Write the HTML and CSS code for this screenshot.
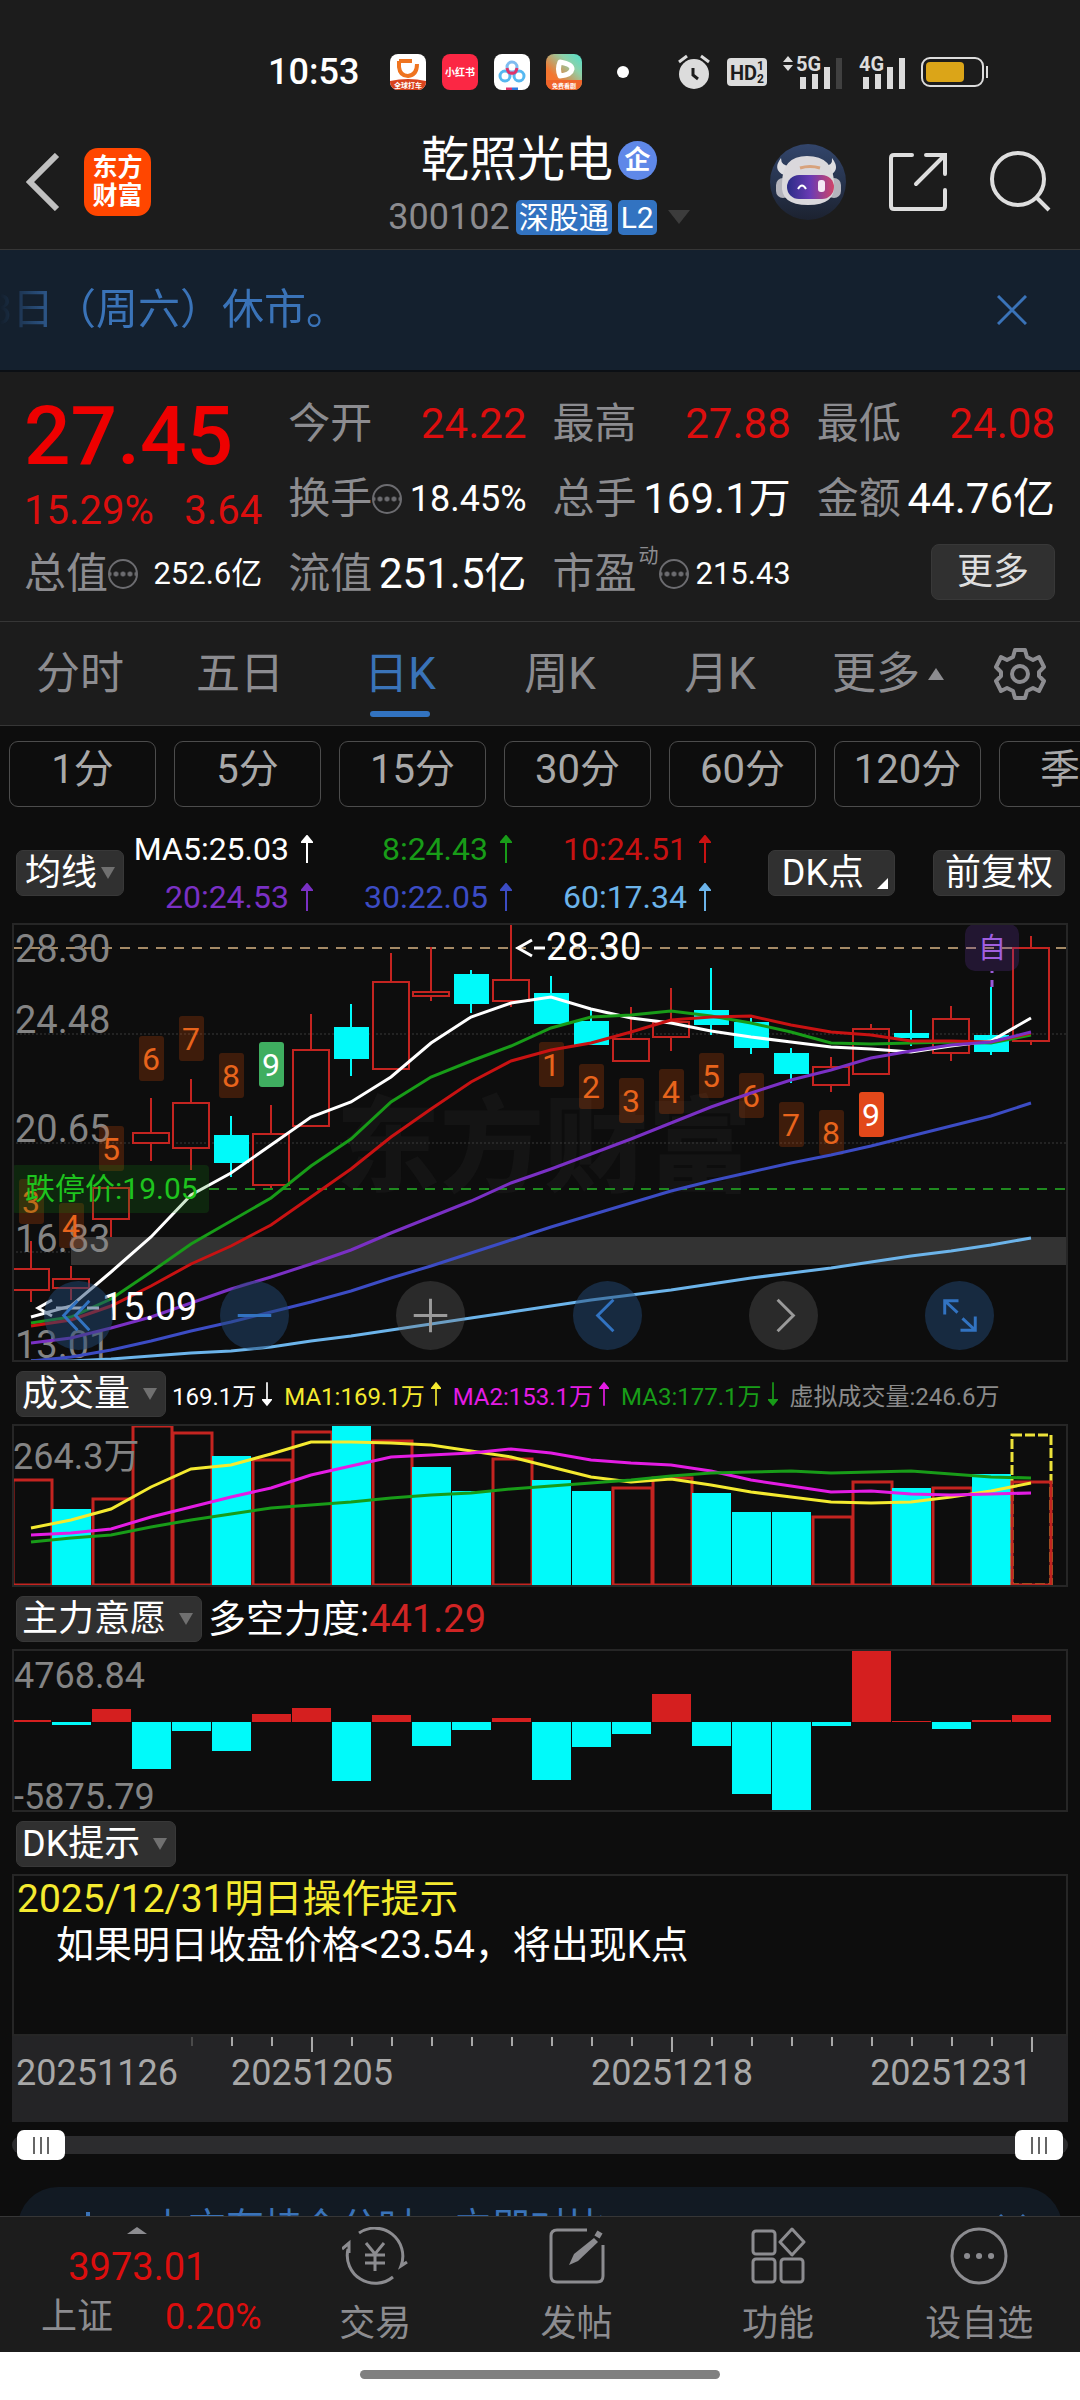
FILE: index.html
```html
<!DOCTYPE html>
<html lang="zh-CN">
<head>
  <meta charset="UTF-8">
  <meta name="viewport" content="width=device-width, initial-scale=1.0">
  <title>乾照光电 300102</title>
  <link rel="stylesheet" href="styles.css">
</head>
<body>
  <div class="status-bar">
    <span class="clock">10:53</span>
    <div class="app-icons">
      <svg width="36" height="36" viewBox="0 0 36 36">
        <clipPath id="appClip"><rect width="36" height="36" rx="8"/></clipPath>
        <g clip-path="url(#appClip)">
          <rect width="36" height="36" fill="#fff"/>
          <path d="M0 27Q18 23 36 27V36H0Z" fill="#d9431e"/>
          <path d="M9 7H22M9 7V13Q10 22 18 22Q27 21 27 10" fill="none" stroke="#ef7420" stroke-width="4"/>
        </g>
        <text x="18" y="34" class="app-text" font-size="7">全球打车</text>
      </svg>
      <svg width="36" height="36" viewBox="0 0 36 36">
        <rect width="36" height="36" rx="8" fill="#fb2744"/>
        <text x="18" y="22" class="app-text" font-size="10">小红书</text>
      </svg>
      <svg width="36" height="36" viewBox="0 0 36 36">
        <rect width="36" height="36" rx="8" fill="#fff"/>
        <circle cx="11" cy="22" r="5" fill="none" stroke="#56b8f0" stroke-width="3"/>
        <circle cx="25" cy="22" r="5" fill="none" stroke="#56b8f0" stroke-width="3"/>
        <circle cx="18" cy="13" r="5" fill="none" stroke="#7fbcf0" stroke-width="3"/>
        <path d="M13 14Q14 20 18 19Q22 20 23 14" fill="none" stroke="#e0336a" stroke-width="3"/>
        <path d="M12 35H18" stroke="#e0336a" stroke-width="3"/><path d="M18 35H24" stroke="#2f7be0" stroke-width="3"/>
      </svg>
      <svg width="36" height="36" viewBox="0 0 36 36">
        <linearGradient id="playBg" x1="0" y1="1" x2="1" y2="0">
          <stop offset="0.3" stop-color="#f4762f"/><stop offset="0.7" stop-color="#8fd0a8"/><stop offset="1" stop-color="#4fe0cc"/>
        </linearGradient>
        <g clip-path="url(#appClip)">
          <rect width="36" height="36" fill="url(#playBg)"/>
          <rect y="26" width="36" height="10" fill="#f0642a"/>
          <path d="M14 8Q26 10 26 15Q25 21 14 22Q11 15 14 8Z" fill="none" stroke="#fff" stroke-width="5" stroke-linejoin="round"/>
        </g>
        <text x="18" y="34" class="app-text" font-size="6">免费看剧</text>
      </svg>
    </div>
    <i class="more-dot"></i>
    <div class="system-icons">
      <svg width="34" height="36" viewBox="0 0 34 36">
        <circle cx="17" cy="20" r="15" fill="#dcdcdc"/>
        <path d="M2 8L10 2M32 8L24 2" stroke="#dcdcdc" stroke-width="3"/>
        <path d="M16 14V21L21 25" fill="none" stroke="#1c1c1c" stroke-width="3"/>
      </svg>
      <svg width="40" height="28" viewBox="0 0 40 28">
        <rect width="40" height="28" rx="4" fill="#dcdcdc"/>
        <text x="3" y="22" font-size="20" class="hd-text">HD</text>
        <text x="30" y="12" font-size="12" class="hd-text">1</text>
        <text x="30" y="25" font-size="12" class="hd-text">2</text>
      </svg>
      <svg width="60" height="34" viewBox="0 0 60 34">
        <path d="M5 1L10 7H0ZM5 16L0 10H10Z" fill="#dcdcdc"/>
        <text x="13" y="16" font-size="20" class="net-text">5G</text>
        <path d="M20 34V22M32 34V19M44 34V12" stroke="#dcdcdc" stroke-width="6"/>
        <path d="M56 34V3" stroke="#404040" stroke-width="6"/>
      </svg>
      <svg width="46" height="34" viewBox="0 0 46 34">
        <text x="0" y="16" font-size="20" class="net-text">4G</text>
        <path d="M7 34V22M19 34V19M31 34V12M43 34V3" stroke="#dcdcdc" stroke-width="6"/>
      </svg>
      <svg width="68" height="30" viewBox="0 0 68 30">
        <rect x="1" y="1" width="61" height="28" rx="8" fill="none" stroke="#dcdcdc" stroke-width="2"/>
        <rect x="5" y="5" width="38" height="20" rx="4" fill="#dba518"/>
        <path d="M66 9V21" stroke="#dcdcdc" stroke-width="2"/>
      </svg>
    </div>
  </div>

  <header class="header">
    <div class="header-left">
      <button class="icon-btn" aria-label="返回">
        <svg width="34" height="58" viewBox="0 0 34 58"><path d="M31 2L4 29L31 56" fill="none" stroke="#c0c0c0" stroke-width="6"/></svg>
      </button>
      <a href="#" class="brand"><span>东方</span><span>财富</span></a>
    </div>
    <div class="header-title">
      <h1>乾照光电<span class="badge">企</span></h1>
      <div class="subtitle">
        <span class="code">300102</span>
        <span class="tag">深股通</span>
        <span class="tag">L2</span>
        <i class="triangle"></i>
      </div>
    </div>
    <div class="header-right">
      <a href="#" class="icon-btn" aria-label="助手">
        <svg width="76" height="76" viewBox="0 0 76 76">
          <linearGradient id="skyBg" x1="0" y1="0" x2="0" y2="1"><stop offset="0" stop-color="#32456b"/><stop offset="1" stop-color="#1c2230"/></linearGradient>
          <linearGradient id="visor"><stop offset="0" stop-color="#2a2c86"/><stop offset="0.5" stop-color="#6a3bb4"/><stop offset="1" stop-color="#d04468"/></linearGradient>
          <circle cx="38" cy="38" r="38" fill="url(#skyBg)"/>
          <path d="M11 14Q2 26 14 31L20 22Q11 22 11 14ZM62 14Q71 26 60 31L54 22Q63 22 62 14Z" fill="#dedee2"/>
          <rect x="6" y="34" width="14" height="20" rx="7" fill="#b4b4bc"/>
          <rect x="57" y="34" width="14" height="20" rx="7" fill="#b4b4bc"/>
          <path d="M12 40Q12 12 37 12Q64 12 64 40Q66 61 38 61Q10 61 12 40Z" fill="#dad8dc"/>
          <rect x="17" y="31" width="47" height="24" rx="12" fill="url(#visor)"/>
          <path d="M28 45Q32 38 36 45" fill="none" stroke="#fff" stroke-width="2"/>
          <rect x="48" y="36" width="7" height="12" rx="3" fill="#f4e8f4"/>
          <path d="M30 24Q40 21 50 24" fill="none" stroke="#d8a27c" stroke-width="3"/>
        </svg>
      </a>
      <button class="icon-btn" aria-label="分享">
        <svg width="60" height="60" viewBox="0 0 60 60"><path d="M24 3H6Q3 3 3 6V54Q3 57 6 57H54Q57 57 57 54V38M38 3H57V22M56 4L28 32" fill="none" stroke="#dedede" stroke-width="4" stroke-linecap="round"/></svg>
      </button>
      <button class="icon-btn" aria-label="搜索">
        <svg width="62" height="62" viewBox="0 0 62 62"><circle cx="28" cy="28" r="26" fill="none" stroke="#dedede" stroke-width="4"/><path d="M47 47L59 59" stroke="#dedede" stroke-width="4"/></svg>
      </button>
    </div>
  </header>

  <div class="notice">
    <div class="notice-text"><span>3日（周六）休市。</span></div>
    <button class="icon-btn" aria-label="关闭">
      <svg width="30" height="30" viewBox="0 0 30 30"><path d="M1 1L29 29M29 1L1 29" stroke="#3a73b8" stroke-width="3"/></svg>
    </button>
  </div>

  <section class="quote">
    <div class="price-box">
      <strong class="price">27.45</strong>
      <div class="change"><span>15.29%</span><span>3.64</span></div>
    </div>
    <div class="cell"><span class="label">今开</span><span class="value up">24.22</span></div>
    <div class="cell"><span class="label">最高</span><span class="value up">27.88</span></div>
    <div class="cell"><span class="label">最低</span><span class="value up">24.08</span></div>
    <div class="cell"><span class="label">换手<i class="info"></i></span><span class="value medium">18.45%</span></div>
    <div class="cell"><span class="label">总手</span><span class="value">169.1万</span></div>
    <div class="cell"><span class="label">金额</span><span class="value">44.76亿</span></div>
    <div class="cell"><span class="label">总值<i class="info"></i></span><span class="value small">252.6亿</span></div>
    <div class="cell"><span class="label">流值</span><span class="value">251.5亿</span></div>
    <div class="cell"><span class="label">市盈<sup>动</sup><i class="info"></i></span><span class="value small">215.43</span></div>
    <div class="cell cell-more"><button class="more-btn">更多</button></div>
  </section>

  <nav class="tabs">
    <a href="#">分时</a>
    <a href="#">五日</a>
    <a href="#" class="active">日K</a>
    <a href="#">周K</a>
    <a href="#">月K</a>
    <a href="#" class="tab-more">更多<i class="triangle-up"></i></a>
    <button class="icon-btn" aria-label="设置">
      <svg width="52" height="52" viewBox="0 0 52 52" fill="none" stroke="#8c8c90" stroke-width="4">
        <path d="M21 2H31L33 9L39 12L45 9L50 19L45 24V28L50 33L45 43L39 40L33 43L31 50H21L19 43L13 40L7 43L2 33L7 28V24L2 19L7 9L13 12L19 9Z" stroke-linejoin="round"/>
        <circle cx="26" cy="26" r="8"/>
      </svg>
    </button>
  </nav>

  <main>
    <div class="chips">
      <button>1分</button>
      <button>5分</button>
      <button>15分</button>
      <button>30分</button>
      <button>60分</button>
      <button>120分</button>
      <button>季K</button>
    </div>

    <div class="ma-row">
      <label class="dropdown compact"><select aria-label="主图指标"><option>均线</option></select></label>
      <div class="ma-grid">
        <span class="c-white">MA5:25.03<svg class="arrow" viewBox="0 0 12 28"><path d="M6 28V4M1 7L6 1L11 7Z"/></svg></span>
        <span class="c-green">8:24.43<svg class="arrow" viewBox="0 0 12 28"><path d="M6 28V4M1 7L6 1L11 7Z"/></svg></span>
        <span class="c-red">10:24.51<svg class="arrow" viewBox="0 0 12 28"><path d="M6 28V4M1 7L6 1L11 7Z"/></svg></span>
        <span class="c-purple">20:24.53<svg class="arrow" viewBox="0 0 12 28"><path d="M6 28V4M1 7L6 1L11 7Z"/></svg></span>
        <span class="c-indigo">30:22.05<svg class="arrow" viewBox="0 0 12 28"><path d="M6 28V4M1 7L6 1L11 7Z"/></svg></span>
        <span class="c-sky">60:17.34<svg class="arrow" viewBox="0 0 12 28"><path d="M6 28V4M1 7L6 1L11 7Z"/></svg></span>
      </div>
      <div class="ma-actions">
        <button class="pill corner">DK点</button>
        <button class="pill">前复权</button>
      </div>
    </div>

    <div class="chart">
      <svg class="plot" viewBox="12 923 1056 439">
        <text x="336" y="1184" class="watermark">东方财富</text>
        <path d="M12 1034H1067M12 1143H1067M12 1252H1067" class="grid"/>
        <rect x="71" y="1237" width="996" height="28" fill="#333"/>
        <path d="M12 948H1067" class="dash" stroke="#a58a66"/>
        <path d="M209 1189H1067" class="dash" stroke="#1f8a1f"/>
        <g class="axis-text">
          <text x="15" y="962">28.30</text>
          <text x="15" y="1033">24.48</text>
          <text x="15" y="1142">20.65</text>
          <text x="15" y="1252">16.83</text>
          <text x="15" y="1358">13.01</text>
        </g>
        <g id="candles"></g>
        <g id="marks"></g>
        <g id="maLines" class="lines"></g>
        <rect x="12" y="1165" width="197" height="48" rx="4" fill="#148c14" fill-opacity="0.2"/>
        <text x="25" y="1199" class="limit-text">跌停价:19.05</text>
        <path d="M532 940L518 948L532 956M534 948H545" class="pointer"/>
        <text x="546" y="960" class="peak-text">28.30</text>
        <path d="M52 1300L38 1308L52 1316M56 1308H68M71 1308H83M87 1308H99" class="pointer"/>
        <text x="102" y="1320" class="peak-text">15.09</text>
        <rect x="965" y="924" width="54" height="47" rx="10" fill="#6a35a8" fill-opacity="0.24"/>
        <text x="992" y="958" class="self-text">自</text>
        <path d="M992 971V973M992 980V987" stroke="#9a5ad8" stroke-width="3"/>
      </svg>
      <div class="chart-tools">
        <button class="blue" aria-label="最左"><svg viewBox="0 0 70 70"><path d="M34 20L20 35L34 50M46 20L32 35L46 50"/></svg></button>
        <button class="blue" aria-label="缩小"><svg viewBox="0 0 70 70"><path d="M18 35H52"/></svg></button>
        <button aria-label="放大"><svg viewBox="0 0 70 70"><path d="M18 35H52M35 18V52"/></svg></button>
        <button class="blue" aria-label="左移"><svg viewBox="0 0 70 70"><path d="M41 19L25 35L41 51"/></svg></button>
        <button aria-label="右移"><svg viewBox="0 0 70 70"><path d="M29 19L45 35L29 51"/></svg></button>
        <button class="blue" aria-label="全屏"><svg viewBox="0 0 70 70"><path d="M20 34V20H34M20 20L33 32M36 50H51V36M51 50L38 38"/></svg></button>
      </div>
    </div>

    <div class="indicator-row">
      <label class="dropdown"><select aria-label="副图指标一"><option>成交量</option></select></label>
      <div class="volume-legend">
        <span class="c-white">169.1万<svg class="arrow down" viewBox="0 0 12 28"><path d="M6 28V4M1 7L6 1L11 7Z"/></svg></span>
        <span class="c-yellow">MA1:169.1万<svg class="arrow" viewBox="0 0 12 28"><path d="M6 28V4M1 7L6 1L11 7Z"/></svg></span>
        <span class="c-magenta">MA2:153.1万<svg class="arrow" viewBox="0 0 12 28"><path d="M6 28V4M1 7L6 1L11 7Z"/></svg></span>
        <span class="c-green">MA3:177.1万<svg class="arrow down" viewBox="0 0 12 28"><path d="M6 28V4M1 7L6 1L11 7Z"/></svg></span>
        <span class="c-grey">虚拟成交量:246.6万</span>
      </div>
    </div>
    <div class="chart">
      <svg class="plot" viewBox="12 1424 1056 163">
        <g id="volume"></g>
        <rect x="1012" y="1435" width="39" height="150" fill="none" stroke="#ece23a" stroke-width="3" stroke-dasharray="10 3"/>
        <rect x="1012" y="1482" width="39" height="103" fill="none" stroke="#c42420" stroke-width="3"/>
        <g id="volumeLines" class="lines"></g>
        <text x="13" y="1469" class="scale-text">264.3万</text>
      </svg>
    </div>

    <div class="indicator-row">
      <label class="dropdown"><select aria-label="副图指标二"><option>主力意愿</option></select></label>
      <span class="force">多空力度:<b>441.29</b></span>
    </div>
    <div class="chart">
      <svg class="plot" viewBox="12 1649 1056 163">
        <g id="force"></g>
        <text x="14" y="1688" class="scale-text">4768.84</text>
        <text x="14" y="1809" class="scale-text">-5875.79</text>
      </svg>
    </div>

    <div class="indicator-row">
      <label class="dropdown"><select aria-label="副图指标三"><option>DK提示</option></select></label>
    </div>
    <div class="tip">
      <p class="tip-title">2025/12/31明日操作提示</p>
      <p class="tip-body">如果明日收盘价格&lt;23.54，将出现K点</p>
    </div>
    <div class="time-axis">
      <svg viewBox="12 2036 1056 86">
        <g id="ticks"></g>
        <text x="16" y="2085">20251126</text>
        <text x="312" y="2085" text-anchor="middle">20251205</text>
        <text x="672" y="2085" text-anchor="middle">20251218</text>
        <text x="1032" y="2085" text-anchor="end">20251231</text>
      </svg>
    </div>
    <div class="range">
      <input type="range" aria-label="起始日期" min="0" max="100" value="0">
      <input type="range" aria-label="结束日期" min="0" max="100" value="100">
    </div>

    <div class="promo">
      <svg width="28" height="30" viewBox="0 0 28 30"><path d="M14 0V14M2 14H26V28H2Z" fill="none" stroke="#3a73b8" stroke-width="4"/></svg>
      <span>上方有持仓分时，立即对比</span>
      <svg width="28" height="28" viewBox="0 0 28 28"><path d="M2 2L26 26M26 2L2 26" stroke="#3a73b8" stroke-width="3"/></svg>
    </div>
  </main>

  <footer class="bottom-bar">
    <a href="#" class="index">
      <i class="triangle-up"></i>
      <span class="index-value">3973.01</span>
      <span class="index-row"><span class="index-name">上证</span><span>0.20%</span></span>
    </a>
    <a href="#">
      <svg width="66" height="58" viewBox="0 0 66 58"><path d="M17 6A28 28 0 0 1 59 39L65 35M6 22A28 28 0 0 0 51 50M0 22L7 16V26"/><path d="M24 16L33 27L42 16M33 27V44M23 28H43M23 36H43"/></svg>
      交易
    </a>
    <a href="#">
      <svg width="56" height="58" viewBox="0 0 56 58"><path d="M38 3H8Q2 3 2 9V49Q2 55 8 55H48Q54 55 54 49V18"/><path d="M51 5L48 10" stroke-width="6"/><path d="M45 11L49 15L29 34L20 38L25 27Z" fill="#8c8c90" stroke="none"/></svg>
      发帖
    </a>
    <a href="#">
      <svg width="56" height="58" viewBox="0 0 56 58"><rect x="3" y="4" width="22" height="23" rx="3"/><rect x="3" y="32" width="22" height="23" rx="3"/><rect x="31" y="32" width="22" height="23" rx="3"/><path d="M42 2L54 15L42 28L30 15Z" stroke-linejoin="round"/></svg>
      功能
    </a>
    <a href="#">
      <svg width="58" height="58" viewBox="0 0 58 58"><circle cx="29" cy="29" r="27"/><path d="M17 29H17.1M29 29H29.1M41 29H41.1" stroke-width="6" stroke-linecap="round"/></svg>
      设自选
    </a>
  </footer>
  <div class="home-bar"><i></i></div>

  <script src="chart.js"></script>
</body>
</html>
```
FILE: styles.css
```css
* {
  margin: 0;
  padding: 0;
  box-sizing: border-box;
  font-family: Roboto, "Noto Sans CJK SC", sans-serif;
}

body {
  display: flex;
  flex-direction: column;
  height: 100vh;
  overflow: hidden;
  background-color: #1c1c1c;
  color: #fff;
}

a {
  color: inherit;
  text-decoration: none;
}

button {
  border: none;
  background: none;
  color: inherit;
  cursor: pointer;
}

svg {
  display: block;
  flex-shrink: 0;
}

.icon-btn {
  display: flex;
  align-items: center;
  justify-content: center;
}

/* Status bar */
.status-bar {
  display: flex;
  align-items: center;
  height: 115px;
  padding: 29px 0 0 268px;
}

.clock {
  width: 90px;
  font-size: 36px;
  font-weight: 500;
}

.app-icons {
  display: flex;
  gap: 16px;
  margin-left: 32px;
}

.app-text {
  fill: #fff;
  font-weight: 700;
  text-anchor: middle;
}

.more-dot {
  width: 12px;
  height: 12px;
  margin: 0 48px 0 35px;
  border-radius: 50%;
  background-color: #fff;
}

.system-icons {
  display: flex;
  align-items: center;
  gap: 16px;
}

.hd-text {
  fill: #1c1c1c;
  font-weight: 700;
}

.net-text {
  fill: #dcdcdc;
  font-weight: 700;
}

/* Header */
.header {
  display: grid;
  grid-template-columns: 1fr auto 1fr;
  align-items: center;
  height: 135px;
  padding: 0 28px 0 26px;
  border-bottom: 1px solid #363636;
}

.header-left {
  display: flex;
  align-items: center;
  gap: 24px;
}

.brand {
  display: flex;
  flex-direction: column;
  align-items: center;
  justify-content: center;
  width: 67px;
  height: 68px;
  border-radius: 14px;
  background-color: #ff4600;
  font-size: 25px;
  font-weight: 700;
  line-height: 28px;
}

.header-title {
  display: flex;
  flex-direction: column;
  align-items: center;
  padding-top: 10px;
}

h1 {
  display: flex;
  align-items: center;
  gap: 5px;
  font-size: 48px;
  font-weight: 400;
  line-height: 60px;
}

.badge {
  width: 39px;
  height: 39px;
  border-radius: 50%;
  background-color: #5f88e8;
  font-size: 26px;
  font-weight: 700;
  line-height: 38px;
  text-align: center;
}

.subtitle {
  display: flex;
  align-items: center;
  gap: 6px;
  height: 54px;
}

.code {
  color: #8c8c90;
  font-size: 36px;
}

.tag {
  height: 35px;
  padding: 0 3px;
  border-radius: 5px;
  background-color: #3273c1;
  font-size: 30px;
  line-height: 35px;
}

.triangle {
  margin-left: 5px;
  border: 11px solid transparent;
  border-top: 14px solid #3c3c3c;
  border-bottom: none;
}

.header-right {
  display: flex;
  align-items: center;
  justify-content: flex-end;
  gap: 42px;
}

/* Notice */
.notice {
  display: flex;
  align-items: center;
  justify-content: space-between;
  height: 122px;
  padding-right: 53px;
  border-bottom: 2px solid #0b0f14;
  background-color: #14202e;
  color: #3a73b8;
}

.notice-text {
  display: flex;
  justify-content: flex-end;
  width: 348px;
  overflow: hidden;
  font-size: 42px;
  line-height: 62px;
  white-space: nowrap;
  -webkit-mask-image: linear-gradient(to right, transparent, #000 72px);
  mask-image: linear-gradient(to right, transparent, #000 72px);
}

/* Quote */
.quote {
  display: grid;
  grid-template-columns: repeat(4, 1fr);
  grid-auto-rows: 75px;
  column-gap: 26px;
  padding: 14px 25px 10px 24px;
  border-bottom: 1px solid #363636;
}

.price-box {
  grid-row: span 2;
}

.price {
  display: block;
  padding-top: 2px;
  color: #ee0000;
  font-size: 82px;
  font-weight: 500;
  line-height: 96px;
}

.change {
  display: flex;
  justify-content: space-between;
  padding-top: 2px;
  color: #dc0e0e;
  font-size: 40px;
  line-height: 50px;
}

.cell {
  display: flex;
  align-items: center;
  justify-content: space-between;
  white-space: nowrap;
}

.label {
  display: flex;
  align-items: center;
  color: #8c8c90;
  font-size: 42px;
  line-height: 60px;
}

.label sup {
  align-self: flex-start;
  margin-left: 2px;
  font-size: 20px;
  line-height: 24px;
}

.info {
  width: 30px;
  height: 30px;
  border: 2px solid #6c6c70;
  border-radius: 50%;
  background: radial-gradient(circle, #6c6c70 2px, transparent 3px) 50% 50% / 7px 26px repeat-x;
}

.value {
  font-size: 42px;
  line-height: 60px;
}

.value.medium {
  font-size: 36px;
}

.value.small {
  font-size: 31px;
}

.value.up {
  color: #dc0e0e;
}

.cell-more {
  justify-content: flex-end;
}

.more-btn {
  width: 124px;
  height: 56px;
  margin-bottom: 4px;
  border: 1px solid #383838;
  border-radius: 8px;
  background-color: #303030;
  color: #dedede;
  font-size: 36px;
  line-height: 50px;
}

/* Period tabs */
.tabs {
  display: grid;
  grid-template-columns: repeat(6, 4fr) 3fr;
  height: 104px;
  border-bottom: 1px solid #363636;
  color: #8c8c90;
  font-size: 44px;
}

.tabs a {
  position: relative;
  display: flex;
  align-items: center;
  justify-content: center;
  line-height: 60px;
}

.tabs .tab-more {
  justify-content: flex-end;
  padding-right: 16px;
}

.tabs .active {
  color: #3a73b8;
}

.tabs .active::after {
  content: '';
  position: absolute;
  bottom: 8px;
  width: 60px;
  height: 6px;
  border-radius: 3px;
  background-color: #3273c1;
}

.triangle-up {
  border: 8px solid transparent;
  border-top: none;
  border-bottom: 12px solid #8c8c90;
}

.tabs .triangle-up {
  margin-left: 8px;
}

/* Chart area */
main {
  flex: 1;
  min-height: 0;
  overflow: hidden;
  background-color: #0d0d0d;
}

.chips {
  display: flex;
  gap: 18px;
  padding: 15px 0 0 9px;
  overflow: hidden;
}

.chips button {
  flex: 0 0 147px;
  height: 66px;
  padding-bottom: 8px;
  border: 1px solid #4c4c4c;
  border-radius: 9px;
  color: #a8a8a8;
  font-size: 40px;
  line-height: 56px;
}

.ma-row {
  display: flex;
  align-items: center;
  padding: 18px 15px 2px 16px;
}

.dropdown {
  position: relative;
  display: block;
}

.dropdown select {
  display: block;
  height: 46px;
  padding: 0 34px 0 5px;
  border: 1px solid #383838;
  border-radius: 7px;
  appearance: none;
  background-color: #303030;
  color: #fff;
  font-size: 36px;
  line-height: 44px;
}

.dropdown::after {
  content: '';
  position: absolute;
  top: 17px;
  right: 9px;
  border: 7px solid transparent;
  border-top: 12px solid #707070;
  border-bottom: none;
  pointer-events: none;
}

.dropdown.compact select {
  padding: 0 25px 0 8px;
}

.ma-grid {
  display: grid;
  grid-template-columns: repeat(3, 177px);
  column-gap: 22px;
  margin-left: 12px;
  font-size: 32px;
  line-height: 48px;
}

.ma-grid span {
  display: flex;
  align-items: center;
  justify-content: flex-end;
  gap: 12px;
  white-space: nowrap;
}

.arrow {
  width: 12px;
  height: 28px;
  fill: currentColor;
  stroke: currentColor;
  stroke-width: 2;
}

.arrow.down {
  transform: rotate(180deg);
}

.ma-actions {
  display: flex;
  gap: 38px;
  margin-left: auto;
}

.pill {
  height: 46px;
  padding: 0 11px;
  border: 1px solid #383838;
  border-radius: 7px;
  background-color: #303030;
  font-size: 36px;
  line-height: 44px;
}

.pill.corner {
  position: relative;
  padding: 0 30px 0 13px;
}

.pill.corner::after {
  content: '';
  position: absolute;
  right: 6px;
  bottom: 6px;
  border-left: 11px solid transparent;
  border-bottom: 11px solid #fff;
}

.c-white { color: #fff; }
.c-green { color: #189c18; }
.c-red { color: #c81212; }
.c-purple { color: #7a30c4; }
.c-indigo { color: #3c4cc4; }
.c-sky { color: #6cb4ea; }
.c-yellow { color: #f4ea30; }
.c-magenta { color: #e41ce4; }
.c-grey { color: #8a8a8a; }

.chart {
  position: relative;
  margin: 0 12px;
}

.plot {
  width: 100%;
  height: auto;
  outline: 2px solid #262626;
  outline-offset: -2px;
}

.grid {
  stroke: #3a3a3a;
  stroke-dasharray: 2 2;
}

.dash {
  stroke-width: 2;
  stroke-dasharray: 10 8;
}

.watermark {
  fill: #141414;
  font-size: 104px;
  font-weight: 900;
}

.axis-text {
  fill: #848484;
  font-size: 38px;
}

.scale-text {
  fill: #848484;
  font-size: 36px;
}

.limit-text {
  fill: #1ec41e;
  font-size: 30px;
}

.peak-text {
  fill: #fff;
  font-size: 38px;
}

.pointer {
  fill: none;
  stroke: #fff;
  stroke-width: 3;
}

.self-text {
  fill: #a05fe0;
  font-size: 28px;
  text-anchor: middle;
}

.mark {
  font-size: 32px;
  text-anchor: middle;
}

.lines {
  fill: none;
  stroke-width: 3;
}

.chart-tools {
  position: absolute;
  right: 7%;
  bottom: 12px;
  left: 3%;
  display: flex;
  justify-content: space-between;
}

.chart-tools button {
  width: 69px;
  height: 69px;
  border-radius: 50%;
  background-color: rgba(110, 110, 110, 0.3);
}

.chart-tools .blue {
  background-color: rgba(33, 71, 115, 0.5);
}

.chart-tools svg {
  fill: none;
  stroke: #9a9a9a;
  stroke-width: 3;
}

.chart-tools .blue svg {
  stroke: #3273c1;
}

.indicator-row {
  display: flex;
  align-items: center;
  height: 62px;
  padding: 2px 0 0 16px;
}

.volume-legend {
  display: flex;
  gap: 12px;
  margin-left: 6px;
  font-size: 24px;
  white-space: nowrap;
}

.volume-legend span {
  display: flex;
  align-items: center;
  gap: 6px;
}

.volume-legend .arrow {
  width: 10px;
}

.force {
  margin-left: 6px;
  font-size: 38px;
  line-height: 56px;
}

.force b {
  color: #d02424;
  font-weight: 400;
}

.tip {
  height: 162px;
  margin: 0 12px;
  padding: 0 3px;
  border: 2px solid #262626;
  line-height: 46px;
}

.tip-title {
  color: #f4ea30;
  font-size: 39px;
}

.tip-body {
  padding-left: 39px;
  font-size: 38px;
}

.time-axis {
  margin: 0 12px;
  background-color: #242426;
}

.time-axis svg {
  width: 100%;
  height: auto;
  fill: #a8a8a8;
  font-size: 36px;
}

/* Two-handle date range */
.range {
  position: relative;
  height: 18px;
  margin: 14px 12px 33px;
  border-radius: 9px;
  background-color: #2c2c2e;
}

.range input {
  position: absolute;
  top: -6px;
  left: 5px;
  width: calc(100% - 10px);
  height: 30px;
  appearance: none;
  background: none;
  pointer-events: none;
}

.range input::-webkit-slider-thumb {
  width: 48px;
  height: 30px;
  border: none;
  border-radius: 7px;
  appearance: none;
  background: linear-gradient(to right, #666 2px, transparent 2px) 16px 7px / 7px 17px no-repeat,
    linear-gradient(to right, #666 2px, transparent 2px) 23px 7px / 7px 17px no-repeat,
    linear-gradient(to right, #666 2px, transparent 2px) 30px 7px / 7px 17px no-repeat,
    #fff;
  pointer-events: auto;
}

.promo {
  display: flex;
  align-items: center;
  gap: 48px;
  height: 80px;
  margin: 0 18px;
  padding: 0 36px 0 56px;
  border-radius: 40px;
  background-color: #121a23;
  color: #3a73b8;
  font-size: 38px;
}

.promo span {
  flex: 1;
  line-height: 54px;
}

/* Bottom bar */
.bottom-bar {
  display: flex;
  flex-shrink: 0;
  height: 136px;
  border-top: 1px solid #363636;
  color: #8c8c90;
  font-size: 36px;
}

.bottom-bar a {
  display: flex;
  flex: 11;
  flex-direction: column;
  align-items: center;
  gap: 14px;
  padding-top: 10px;
  line-height: 50px;
}

.bottom-bar svg {
  fill: none;
  stroke: #8c8c90;
  stroke-width: 3;
}

.bottom-bar .index {
  flex: 15;
  gap: 0;
  color: #dc0e0e;
}

.index .triangle-up {
  border-width: 0 10px 7px;
}

.index-value {
  margin-top: 8px;
  font-size: 38px;
}

.index-row {
  display: flex;
  gap: 52px;
  padding-left: 28px;
}

.index-name {
  color: #8c8c90;
}

.home-bar {
  display: flex;
  flex-shrink: 0;
  justify-content: center;
  height: 48px;
  padding-top: 18px;
  background-color: #fff;
}

.home-bar i {
  width: 33.3%;
  height: 9px;
  border-radius: 5px;
  background-color: #808080;
}
```
FILE: chart.js
```js
const RED = '#c42420';
const CYAN = '#00fafa';

// [rising, high, body top, body bottom, low]
const candles = [
  [1, 1241, 1269, 1290, 1302], [1, 1266, 1279, 1288, 1300], [1, 1188, 1188, 1219, 1237],
  [1, 1098, 1133, 1143, 1161], [1, 1079, 1103, 1148, 1170], [0, 1116, 1135, 1163, 1177],
  [1, 1105, 1134, 1185, 1188], [1, 1014, 1050, 1126, 1126], [0, 1004, 1027, 1059, 1076],
  [1, 953, 982, 1069, 1069], [1, 947, 992, 996, 1001], [0, 970, 974, 1004, 1013],
  [1, 924, 980, 1001, 1007], [0, 976, 993, 1024, 1024], [0, 1010, 1021, 1045, 1045],
  [1, 1007, 1039, 1061, 1061], [1, 988, 1022, 1037, 1051], [0, 968, 1010, 1025, 1035],
  [0, 1018, 1022, 1048, 1054], [0, 1048, 1053, 1074, 1083], [1, 1057, 1067, 1085, 1092],
  [1, 1024, 1029, 1074, 1074], [0, 1010, 1033, 1038, 1046], [1, 1006, 1019, 1053, 1061],
  [0, 987, 1035, 1052, 1055], [1, 936, 948, 1041, 1045]
];

// [column, digit, top, colour of a finished count]
const marks = [
  [0, 3, 1179], [1, 4, 1203], [2, 5, 1126], [3, 6, 1036], [4, 7, 1016], [5, 8, 1053], [6, 9, 1042, '#3fae60'],
  [13, 1, 1042], [14, 2, 1064], [15, 3, 1078], [16, 4, 1069], [17, 5, 1053], [18, 6, 1073], [19, 7, 1102],
  [20, 8, 1110], [21, 9, 1092, '#e2481a']
];

const maLines = {
  '#6cb4ea': [1361, 1361, 1359, 1356, 1353, 1351, 1347, 1341, 1336, 1330, 1324, 1318, 1312, 1306, 1300, 1295, 1290, 1284, 1278, 1273, 1268, 1262, 1256, 1251, 1245, 1238],
  '#3c4cc4': [1361, 1357, 1350, 1341, 1331, 1322, 1312, 1302, 1291, 1278, 1266, 1253, 1240, 1227, 1215, 1203, 1191, 1181, 1172, 1163, 1155, 1146, 1136, 1126, 1116, 1103],
  '#ffffff': [1317, 1306, 1272, 1237, 1195, 1173, 1145, 1117, 1102, 1077, 1043, 1017, 1003, 997, 1009, 1018, 1023, 1031, 1037, 1042, 1047, 1049, 1052, 1046, 1041, 1018],
  '#189c18': [1323, 1317, 1299, 1272, 1244, 1221, 1198, 1166, 1139, 1102, 1077, 1061, 1046, 1028, 1017, 1015, 1011, 1016, 1023, 1032, 1043, 1044, 1043, 1042, 1043, 1035],
  '#c81212': [1326, 1320, 1306, 1286, 1264, 1246, 1225, 1197, 1169, 1137, 1109, 1082, 1061, 1050, 1043, 1032, 1020, 1017, 1016, 1025, 1032, 1035, 1041, 1041, 1042, 1033],
  '#7a30c4': [1343, 1338, 1328, 1317, 1303, 1289, 1277, 1264, 1250, 1233, 1217, 1201, 1183, 1169, 1154, 1139, 1123, 1107, 1093, 1080, 1070, 1058, 1051, 1045, 1042, 1032]
};

// [rising, bar top]
const volume = [
  [1, 1479], [0, 1509], [1, 1498], [1, 1425], [1, 1432], [0, 1456], [1, 1459], [1, 1431], [0, 1425],
  [1, 1440], [0, 1467], [0, 1491], [1, 1458], [0, 1480], [0, 1491], [1, 1487], [1, 1477], [0, 1493],
  [0, 1512], [0, 1512], [1, 1516], [1, 1481], [0, 1488], [1, 1487], [0, 1474]
];

const volumeLines = {
  '#f4ea30': [1528, 1520, 1509, 1487, 1469, 1465, 1454, 1442, 1442, 1443, 1445, 1451, 1457, 1467, 1477, 1482, 1479, 1485, 1492, 1497, 1502, 1503, 1502, 1497, 1491, 1483],
  '#e41ce4': [1535, 1533, 1529, 1517, 1507, 1497, 1488, 1475, 1466, 1457, 1455, 1453, 1449, 1453, 1460, 1463, 1465, 1471, 1480, 1486, 1492, 1491, 1494, 1495, 1494, 1493],
  '#189c18': [1542, 1538, 1535, 1527, 1520, 1514, 1508, 1505, 1502, 1498, 1495, 1493, 1489, 1486, 1483, 1480, 1476, 1473, 1472, 1471, 1473, 1472, 1471, 1474, 1477, 1478]
};

const zero = 1722;
const force = [
  1720, 1725, 1709, 1769, 1731, 1751, 1714, 1708, 1781, 1715, 1746, 1730, 1718,
  1780, 1747, 1734, 1694, 1746, 1794, 1811, 1726, 1650, 1721, 1729, 1720, 1715
];

// Centre of a column
const x = i => 31 + i * 40;

const fill = (id, parts) => {
  document.getElementById(id).innerHTML = parts.join('');
};

const rect = (left, top, width, height, color) =>
  `<rect x="${left}" y="${top}" width="${width}" height="${height}" fill="${color}"/>`;

const outline = (left, top, width, height, line) =>
  `<rect x="${left}" y="${top}" width="${width}" height="${height}" fill="none" stroke="${RED}" stroke-width="${line}"/>`;

const drawLines = lines => Object.entries(lines).map(([color, ys]) =>
  `<polyline stroke="${color}" points="${ys.map((y, i) => x(i) + ',' + y).join(' ')}"/>`);

fill('candles', candles.map(([rising, high, top, bottom, low], i) => {
  const color = rising ? RED : CYAN;
  const wick = `<path d="M${x(i)} ${high}V${top}M${x(i)} ${bottom}V${low}" stroke="${color}" stroke-width="2"/>`;
  return wick + (rising
    ? outline(x(i) - 18, top, 36, bottom - top, 2)
    : rect(x(i) - 17, top, 35, bottom - top, color));
}));

fill('marks', marks.map(([i, digit, top, solid]) =>
  `<rect x="${x(i) - 12}" y="${top}" width="25" height="45" rx="3" fill="${solid || '#dc500a'}" fill-opacity="${solid ? 1 : 0.24}"/>` +
  `<text class="mark" x="${x(i)}" y="${top + 34}" fill="${solid ? '#fff' : '#e8641c'}">${digit}</text>`));

fill('maLines', drawLines(maLines));

fill('volume', volume.map(([rising, top], i) => rising
  ? outline(x(i) - 18, top + 1, 39, 1584 - top, 3)
  : rect(x(i) - 19, top, 39, 1585 - top, CYAN)));

fill('volumeLines', drawLines(volumeLines));

fill('force', force.map((y, i) => y < zero
  ? rect(x(i) - 19, y, 39, zero - y, '#d51f1f')
  : rect(x(i) - 19, zero, 39, y - zero, CYAN)));

fill('ticks', candles.slice(4).map((_, n) => {
  const i = n + 4;
  return rect(x(i), 2037, 2, [7, 16, 25].includes(i) ? 15 : 9, i === 4 ? '#4a4a4a' : '#a8a8a8');
}));
```
